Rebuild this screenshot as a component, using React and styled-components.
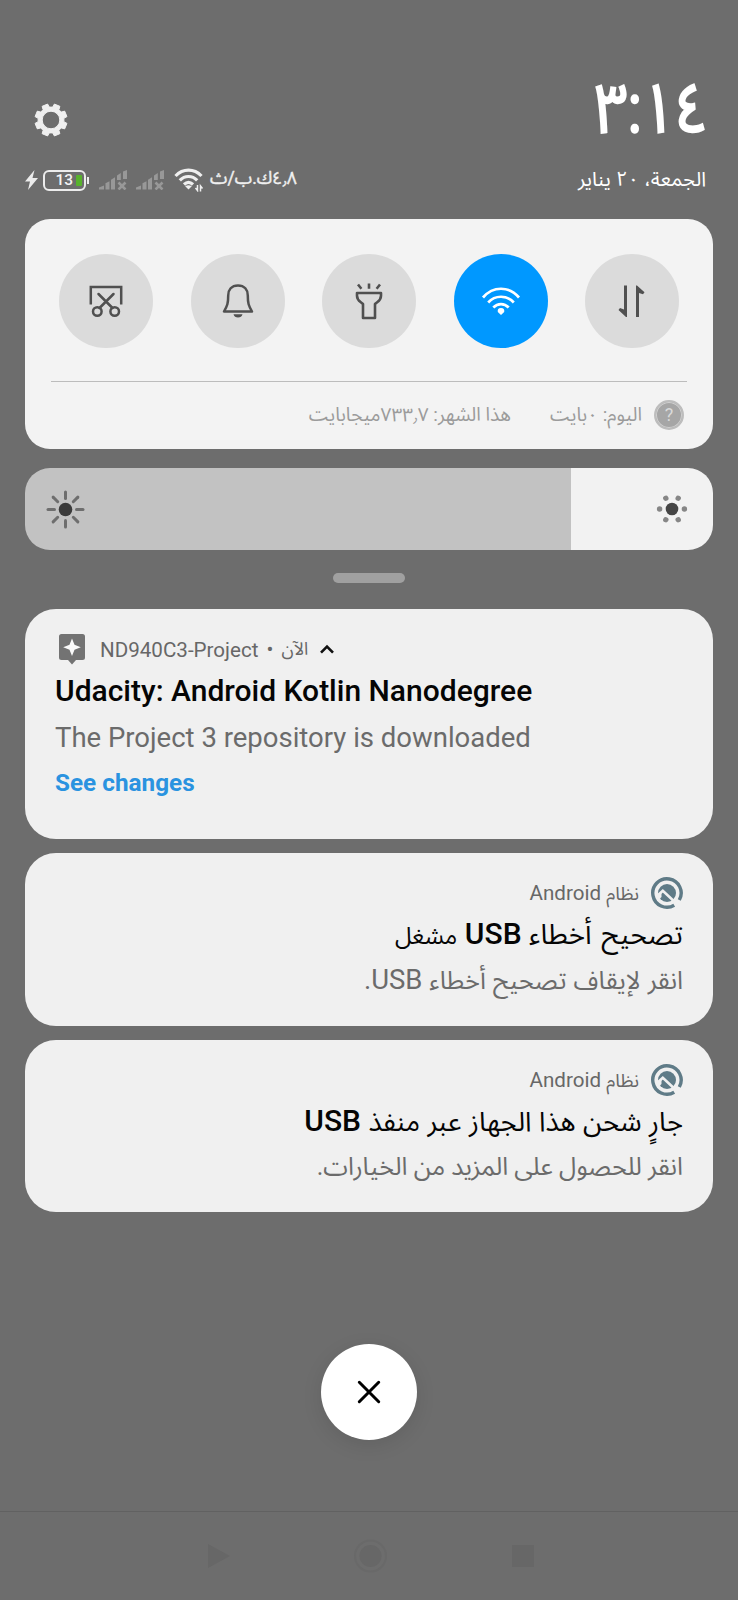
import React from 'react';
import styled, { createGlobalStyle } from 'styled-components';

const GlobalStyle = createGlobalStyle`
  * { box-sizing: border-box; }
  body { margin: 0; background: #6d6d6d; }
`;

const Screen = styled.main`
  width: 738px;
  height: 1600px;
  background: #6d6d6d;
  display: flex;
  flex-direction: column;
  overflow: hidden;
  font-family: Roboto, 'Noto Sans Arabic', 'Noto Sans', 'DejaVu Sans', sans-serif;
`;

const Header = styled.header`
  height: 219px;
  padding: 71px 32px 0 25px;
  display: flex;
  flex-direction: column;
`;

const HeaderRow = styled.div`
  display: flex;
  justify-content: space-between;
  align-items: center;
  height: ${(p) => p.$height}px;
`;

const GearSlot = styled.div`
  padding: 22px 0 0 9px;
  line-height: 0;
`;

const Arabic = styled.span`
  display: inline-block;
  direction: rtl;
  white-space: nowrap;
  font-size: ${(p) => p.$size}px;
  font-weight: ${(p) => p.$weight || 400};
  line-height: 1;
  color: ${(p) => p.$color || 'inherit'};
  word-spacing: ${(p) => p.$words || 0}px;
`;

const Clock = styled(Arabic)`
  margin-right: -2px;
  padding-bottom: 2px;
  transform: scaleX(0.84);
  transform-origin: right center;
  -webkit-text-stroke: 2.4px #fff;
`;

const Speed = styled(Arabic)`
  padding-bottom: 2px;
  -webkit-text-stroke: 0.4px currentColor;
`;

const DateText = styled(Arabic)`
  padding-bottom: 2px;
`;

const StatusIcons = styled.div`
  display: flex;
  align-items: center;
  color: #f0f0f0;
`;

const Battery = styled.div`
  width: 43px;
  height: 21px;
  margin-left: 5px;
  border: 2.5px solid #ececec;
  border-radius: 6px;
  display: flex;
  align-items: center;
  justify-content: flex-end;
  gap: 3px;
  padding-right: 2px;
  font-size: 15.5px;
  font-weight: 500;
  line-height: 16px;
  color: #f4f4f4;
`;

const Charge = styled.i`
  width: 6px;
  height: 11px;
  border-radius: 1px;
  background: #58b22c;
`;

const BatteryTip = styled.i`
  width: 2px;
  height: 7px;
  margin: 0 10px 0 1px;
  background: #ececec;
`;

const QuickPanel = styled.section`
  height: 230px;
  margin: 0 25px;
  padding: 35px 26px 0;
  border-radius: 25px;
  background: #f3f3f3;
`;

const Toggles = styled.div`
  display: flex;
  justify-content: space-between;
  padding: 0 8px;
  height: 127px;
`;

const Toggle = styled.button`
  width: 94px;
  height: 94px;
  padding: 0;
  border: 0;
  border-radius: 50%;
  display: grid;
  place-items: center;
  background: ${(p) => (p.$on ? '#0098ff' : '#dbdbdb')};
`;

const Usage = styled.div`
  direction: rtl;
  display: flex;
  align-items: center;
  height: 67px;
  padding-right: 3px;
  border-top: 1px solid #bcbcbc;
  color: #9b9b9b;
`;

const Help = styled.span`
  width: 30px;
  height: 30px;
  margin-left: 12px;
  border: 2px solid #bdbdbd;
  box-shadow: inset 0 0 0 1px #d0d0d0;
  border-radius: 50%;
  background: #a6a6a6;
  display: grid;
  place-items: center;
  color: #dadada;
  font-size: 18px;
  line-height: 1;
`;

const UsageText = styled(Arabic)`
  margin-left: ${(p) => p.$gap || 0}px;
  padding-bottom: 2px;
`;

const Brightness = styled.div`
  flex: none;
  display: flex;
  justify-content: space-between;
  align-items: center;
  height: 82px;
  margin: 19px 25px 0;
  padding: 0 25px 0 21px;
  border-radius: 25px;
  background: linear-gradient(to right, #c2c2c2 546px, #f2f2f2 546px);
`;

const Handle = styled.div`
  flex: none;
  width: 72px;
  height: 10px;
  margin: 23px auto 26px;
  border-radius: 5px;
  background: #a0a0a0;
`;

const Notification = styled.article`
  flex: none;
  height: ${(p) => p.$height}px;
  margin: 0 25px 14px;
  padding: 24px 30px 0;
  direction: ${(p) => (p.$rtl ? 'rtl' : 'ltr')};
  border-radius: 31px;
  background: #f0f0f0;
  color: #676767;
`;

const Source = styled.div`
  display: flex;
  align-items: center;
  height: 32px;
  font-size: 20.6px;
  line-height: 32px;
  white-space: nowrap;
`;

const SourceName = styled.span`
  padding-top: ${(p) => p.$drop || 0}px;
`;

const Title = styled.h2`
  margin: 0;
  height: 46px;
  line-height: ${(p) => p.$line || 50}px;
  font-size: ${(p) => p.$size || 30}px;
  font-weight: 500;
  color: #050505;
  white-space: nowrap;
`;

const Body = styled.p`
  margin: 0;
  height: 45px;
  line-height: ${(p) => p.$line || 50}px;
  font-size: 27.5px;
  color: #6b6b6b;
  white-space: nowrap;
`;

const Action = styled.a`
  display: block;
  line-height: 54px;
  font-size: 24.3px;
  font-weight: 700;
  color: #2a93e0;
`;

const Spaced = styled.span`
  display: inline-flex;
  margin: 0 ${(p) => p.$right || 0}px 0 ${(p) => p.$left || 0}px;
`;

const CloseButton = styled.button`
  flex: none;
  width: 96px;
  height: 96px;
  margin: 118px auto 0;
  padding: 0;
  border: 0;
  border-radius: 50%;
  display: grid;
  place-items: center;
  background: #fff;
  box-shadow: 0 5px 20px rgba(0, 0, 0, 0.1);
`;

const NavBar = styled.nav`
  flex: none;
  display: flex;
  justify-content: space-between;
  align-items: center;
  height: 89px;
  margin-top: auto;
  padding: 0 204px 0 208px;
  border-top: 1px solid #616161;
`;

const Gear = () => {
  const pts = [];
  for (let i = 0; i < 8; i++) {
    const c = i * 45 + 22.5;
    [[-15, 13], [-10.5, 16.3], [10.5, 16.3], [15, 13]].forEach(([d, r]) => {
      const a = ((c + d) * Math.PI) / 180;
      pts.push(`${(17 + r * Math.cos(a)).toFixed(2)},${(17 + r * Math.sin(a)).toFixed(2)}`);
    });
  }
  return (
    <svg width="34" height="34" viewBox="0 0 34 34">
      <path
        fill="#efefef"
        stroke="#efefef"
        strokeWidth="1"
        strokeLinejoin="round"
        fillRule="evenodd"
        d={`M${pts.join('L')}ZM17 8.2a8.8 8.8 0 1 0 0 17.6a8.8 8.8 0 1 0 0-17.6Z`}
      />
    </svg>
  );
};

const Bolt = () => (
  <svg width="13" height="20" viewBox="0 0 13 20">
    <path d="M9.5 0 0 11.5h5L3 20 13 8H7.5Z" fill="#ececec" />
  </svg>
);

const Signal = () => (
  <svg width="37" height="20" viewBox="0 0 37 20" fill="#989898">
    <path d="M0 19.5v-2l5-2v4ZM6.500 19.500v-6.200l4-2v8.200ZM12 19.500V9.700l4-2.500v12.300ZM18 10V5.500L21.800 3v7ZM24 9V1.500L28 0v9Z" />
    <path d="m19.500 12.500 7 7m0-7-7 7" stroke="#989898" strokeWidth="2.600" />
  </svg>
);

const StatusWifi = () => (
  <svg width="36" height="24" viewBox="0 0 36 24" fill="none" stroke="#efefef">
    <path d="M1.500 8C9 .2 20 .2 27.500 8M5.800 12.400c5-5.200 12.400-5.200 17.400 0M10 16.500c2.800-2.700 6.200-2.700 9 0" strokeWidth="3.200" />
    <path d="M11.200 18.200q3.300-2 6.600 0L14.500 21.500Z" fill="#efefef" stroke="none" />
    <path d="M23.500 17v5.500l-2-2.500M26.500 23.500V18l2 2.500" strokeWidth="1.500" />
  </svg>
);

const Screenshot = () => (
  <svg width="34" height="34" viewBox="0 0 34 34" fill="none" stroke="#505050" strokeWidth="2.500">
    <path d="M1.800 20.500V3h30.400v17.500" />
    <path d="m9.500 10 14 14M24.500 10l-14 14" strokeLinecap="round" />
    <circle cx="8.300" cy="27.500" r="4.300" />
    <circle cx="25.700" cy="27.500" r="4.300" />
  </svg>
);

const Bell = () => (
  <svg width="34" height="36" viewBox="0 0 34 36" fill="none" stroke="#505050" strokeWidth="2.500" strokeLinejoin="round">
    <path d="M17 2.500C10.500 2.500 7.200 7 7.200 12.500c0 8-.8 10-4.200 16h28c-3.400-6-4.200-8-4.200-16 0-5.500-3.300-10-9.800-10Z" />
    <path d="M12.500 31.300h9q-1 3.200-4.500 3.200t-4.500-3.200Z" fill="#505050" stroke="none" />
  </svg>
);

const Flashlight = () => (
  <svg width="32" height="38" viewBox="0 0 32 38" fill="none" stroke="#505050" strokeWidth="2.600" strokeLinejoin="round">
    <path d="M4 11h24v2.800c0 5-3 5.500-6 8.200v14H10V22c-3-2.700-6-3.200-6-8.200Z" />
    <path d="m5 2.500 3.400 4.200M16 1.500v5.200M27 2.500l-3.400 4.200" />
  </svg>
);

const Wifi = () => (
  <svg width="40" height="28" viewBox="0 0 40 28" fill="none" stroke="#fff" strokeWidth="2.700">
    <path d="M2 10.500C12-1.200 28-1.200 38 10.500M7.200 15.500C14 7.800 26 7.800 32.800 15.500M12.300 20.500c4.500-4.600 10.900-4.600 15.400 0" />
    <path d="M20 28 16.800 25q-.7-4 3.200-4t3.200 4Z" fill="#fff" stroke="none" />
  </svg>
);

const MobileData = () => (
  <svg width="28" height="34" viewBox="0 0 28 34" fill="#505050">
    <path d="M6 1.500h3v31.500H8L.5 26 2 24l4 1.500ZM18 33h3V9l4 1.200 1.500-2L19 1.500H18Z" />
  </svg>
);

const Sun = () => (
  <svg width="39" height="39" viewBox="0 0 39 39" stroke="#6e6e6e" strokeWidth="3" strokeLinecap="round">
    <circle cx="19.500" cy="19.500" r="6.800" fill="#3b3b3b" stroke="none" />
    {[0, 45, 90, 135, 180, 225, 270, 315].map((a) => (
      <path key={a} d="M19.500 2v6.500" transform={`rotate(${a} 19.500 19.500)`} />
    ))}
  </svg>
);

const DimSun = () => (
  <svg width="32" height="32" viewBox="0 0 32 32" fill="#868686">
    <circle cx="16" cy="16" r="6.300" fill="#454545" />
    {[0, 60, 120, 180, 240, 300].map((a) => (
      <circle key={a} cx="28.400" cy="16" r="2.700" transform={`rotate(${a} 16 16)`} />
    ))}
  </svg>
);

const Assistant = () => (
  <svg width="26" height="31" viewBox="0 0 26 31">
    <path d="M2.500 0h21A2.500 2.500 0 0 1 26 2.500v21a2.500 2.500 0 0 1-2.500 2.500H17l-4 4.500L9 26H2.500A2.500 2.500 0 0 1 0 23.500v-21A2.500 2.500 0 0 1 2.500 0Z" fill="#737373" />
    <path d="M13 4.500 15.500 10.800 21.800 13.300 15.500 15.800 13 22.100 10.500 15.800 4.200 13.300 10.500 10.800Z" fill="#fafafa" />
  </svg>
);

const Chevron = () => (
  <svg width="14" height="10" viewBox="0 0 14 10" fill="none" stroke="#111" strokeWidth="2.600">
    <path d="M1 8.700 7 2.500l6 6.200" />
  </svg>
);

const AndroidQ = () => (
  <svg width="32" height="32" viewBox="0 0 32 32" fill="none">
    <path d="M23.200 28.200A14.200 14.200 0 1 1 28.300 23" stroke="#5f7b87" strokeWidth="3.400" />
    <circle cx="16" cy="16" r="9" fill="#5f7b87" />
    <path d="M5.500 19.500 11.800 13.800 26.500 27.500" stroke="#f0f0f0" strokeWidth="2.600" />
    <path d="M6 19.500 10.500 15.500V20l-2 2Z" fill="#f0f0f0" />
  </svg>
);

const Cross = () => (
  <svg width="24" height="24" viewBox="0 0 24 24" stroke="#000" strokeWidth="3" strokeLinecap="round">
    <path d="m2.300 2.300 19.400 19.400m0-19.400L2.300 21.700" />
  </svg>
);

const SystemSource = () => (
  <Source>
    <Spaced $left={12}><AndroidQ /></Spaced>
    <SourceName><Arabic $size={18.7}>نظام</Arabic> Android</SourceName>
  </Source>
);

export default function App() {
  return (
    <Screen>
      <GlobalStyle />
      <Header>
        <HeaderRow $height={76}>
          <GearSlot><Gear /></GearSlot>
          <Clock $size={69} $color="#fff">٣:١٤</Clock>
        </HeaderRow>
        <HeaderRow $height={66}>
          <StatusIcons>
            <Bolt />
            <Battery>13<Charge /></Battery>
            <BatteryTip />
            <Signal />
            <Signal />
            <Spaced $left={1}><StatusWifi /></Spaced>
            <Speed $size={17.6}>٤٫٨ك.ب/ث</Speed>
          </StatusIcons>
          <DateText $size={20.3} $color="#fff">الجمعة، ٢٠ يناير</DateText>
        </HeaderRow>
      </Header>

      <QuickPanel>
        <Toggles>
          <Toggle aria-label="Screenshot"><Screenshot /></Toggle>
          <Toggle aria-label="Mute"><Bell /></Toggle>
          <Toggle aria-label="Flashlight"><Flashlight /></Toggle>
          <Toggle aria-label="Wi-Fi" $on><Wifi /></Toggle>
          <Toggle aria-label="Mobile data"><MobileData /></Toggle>
        </Toggles>
        <Usage>
          <Help>?</Help>
          <UsageText $size={19} $gap={39}>اليوم: ٠بايت</UsageText>
          <UsageText $size={19}>هذا الشهر: ٧٣٣٫٧ميجابايت</UsageText>
        </Usage>
      </QuickPanel>

      <Brightness><Sun /><DimSun /></Brightness>
      <Handle />

      <Notification $height={230}>
        <Source>
          <Spaced $left={4} $right={15}><Assistant /></Spaced>
          <SourceName $drop={2}>ND940C3-Project</SourceName>
          <Spaced $left={8} $right={8}>•</Spaced>
          <Arabic $size={17.9}>الآن</Arabic>
          <Spaced $left={12}><Chevron /></Spaced>
        </Source>
        <Title $line={52}>Udacity: Android Kotlin Nanodegree</Title>
        <Body $line={53}>The Project 3 repository is downloaded</Body>
        <Action>See changes</Action>
      </Notification>

      <Notification $height={173} $rtl>
        <SystemSource />
        <Title $line={49}><Arabic $size={28} $words={3}>تصحيح أخطاء</Arabic> USB <Arabic $size={23.8}>مشغل</Arabic></Title>
        <Body><Arabic $size={25.3} $words={0.8}>انقر لإيقاف تصحيح أخطاء</Arabic> USB.</Body>
      </Notification>

      <Notification $height={172} $rtl>
        <SystemSource />
        <Title><Arabic $size={27.2} $words={0.8}>جارٍ شحن هذا الجهاز عبر منفذ</Arabic> USB</Title>
        <Body $line={48}><Arabic $size={25}>انقر للحصول على المزيد من الخيارات.</Arabic></Body>
      </Notification>

      <CloseButton aria-label="Clear all"><Cross /></CloseButton>

      <NavBar>
        <svg width="22" height="24" viewBox="0 0 22 24"><path d="M0 0 22 12 0 24Z" fill="#676767" /></svg>
        <svg width="34" height="34" viewBox="0 0 34 34"><circle cx="16.500" cy="17" r="15.500" fill="none" stroke="#696969" strokeWidth="2" /><circle cx="16.500" cy="17" r="11" fill="#676767" /></svg>
        <svg width="22" height="22" viewBox="0 0 22 22"><path d="M0 0h22v22H0Z" fill="#676767" /></svg>
      </NavBar>
    </Screen>
  );
}
